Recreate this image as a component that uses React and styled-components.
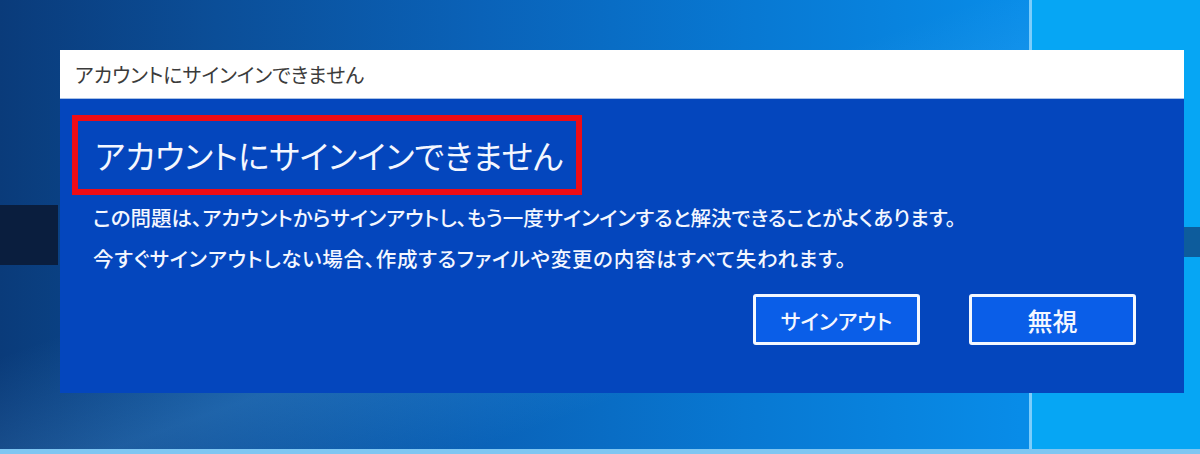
import styled, { createGlobalStyle } from "styled-components";

const GlobalStyle = createGlobalStyle`
  html, body {
    margin: 0;
    padding: 0;
  }
  body {
    font-family: "Noto Sans CJK JP", "Noto Sans", sans-serif;
  }
`;

const Desktop = styled.div`
  width: 1200px;
  height: 454px;
  overflow: hidden;
  display: flex;
  align-items: flex-start;
  padding: 50px 0 0 60px;
  box-sizing: border-box;
  background:
    linear-gradient(to bottom, transparent 205px, #0a1e3e 205px, #0a1e3e 265px, transparent 265px) 0 0 / 58px 100% no-repeat,
    linear-gradient(to bottom, transparent 227px, #0d5c9c 227px, #0d5c9c 257px, transparent 257px) 1184px 0 / 16px 100% no-repeat,
    linear-gradient(to bottom, transparent 449px, #7fc6f2 449px) 0 0 / 100% 100% no-repeat,
    linear-gradient(to right, transparent 1029px, #7ccdfb 1029px, #7ccdfb 1032px, #06a6f4 1032px),
    linear-gradient(160deg, rgba(255, 255, 255, 0) 40%, rgba(120, 200, 255, 0.18) 55%, rgba(255, 255, 255, 0) 70%),
    linear-gradient(to right, #0a3b7a 0%, #0b4e98 18%, #0a62b8 40%, #0878d2 62%, #088ce8 85%);
`;

const Dialog = styled.div`
  width: 1124px;
  display: flex;
  flex-direction: column;
`;

const TitleBar = styled.div`
  height: 48px;
  background: #ffffff;
  border-bottom: 1px solid #a9c2e6;
  display: flex;
  align-items: center;
  padding-left: 15px;
  font-size: 20px;
  color: #3b3b3b;
  font-feature-settings: "palt";
`;

const Body = styled.div`
  height: 294px;
  background: #0446bd;
  padding: 16px 48px 0 12px;
  box-sizing: border-box;
  display: flex;
  flex-direction: column;
  color: #f4f7ff;
`;

const Highlight = styled.div`
  width: 510px;
  height: 80px;
  border: 6px solid #ee0c16;
  box-sizing: border-box;
  display: flex;
  align-items: center;
  padding-left: 17px;
`;

const Heading = styled.h1`
  margin: 0;
  font-size: 32.4px;
  font-weight: 400;
  line-height: 1;
  font-feature-settings: "palt";
  white-space: nowrap;
`;

const Message = styled.div`
  margin: 2px 0 0 21px;
  display: flex;
  flex-direction: column;
`;

const Line = styled.p`
  margin: 0;
  font-size: 20.5px;
  font-weight: 500;
  line-height: 41px;
  white-space: nowrap;
  font-feature-settings: "palt";
  letter-spacing: ${(p) => p.$spacing || 0}px;
`;

const Actions = styled.div`
  margin-top: 15px;
  display: flex;
  justify-content: flex-end;
  gap: 49px;
`;

const Button = styled.button`
  width: 167px;
  height: 51px;
  background: #0a5ee8;
  border: 3px solid #f4f8ff;
  border-radius: 3px;
  color: #f4f7ff;
  font-family: inherit;
  font-size: ${(p) => p.$size || 22}px;
  font-weight: 500;
  font-feature-settings: "palt";
  display: flex;
  align-items: center;
  justify-content: center;
  padding: 0;
  cursor: pointer;
`;

const App = () => {
  return (
    <>
      <GlobalStyle />
      <Desktop>
        <Dialog>
          <TitleBar>アカウントにサインインできません</TitleBar>
          <Body>
            <Highlight>
              <Heading>アカウントにサインインできません</Heading>
            </Highlight>
            <Message>
              <Line>この問題は、アカウントからサインアウトし、もう一度サインインすると解決できることがよくあります。</Line>
              <Line $spacing={0.75}>今すぐサインアウトしない場合、作成するファイルや変更の内容はすべて失われます。</Line>
            </Message>
            <Actions>
              <Button $size={21}>サインアウト</Button>
              <Button $size={25}>無視</Button>
            </Actions>
          </Body>
        </Dialog>
      </Desktop>
    </>
  );
};

export default App;
